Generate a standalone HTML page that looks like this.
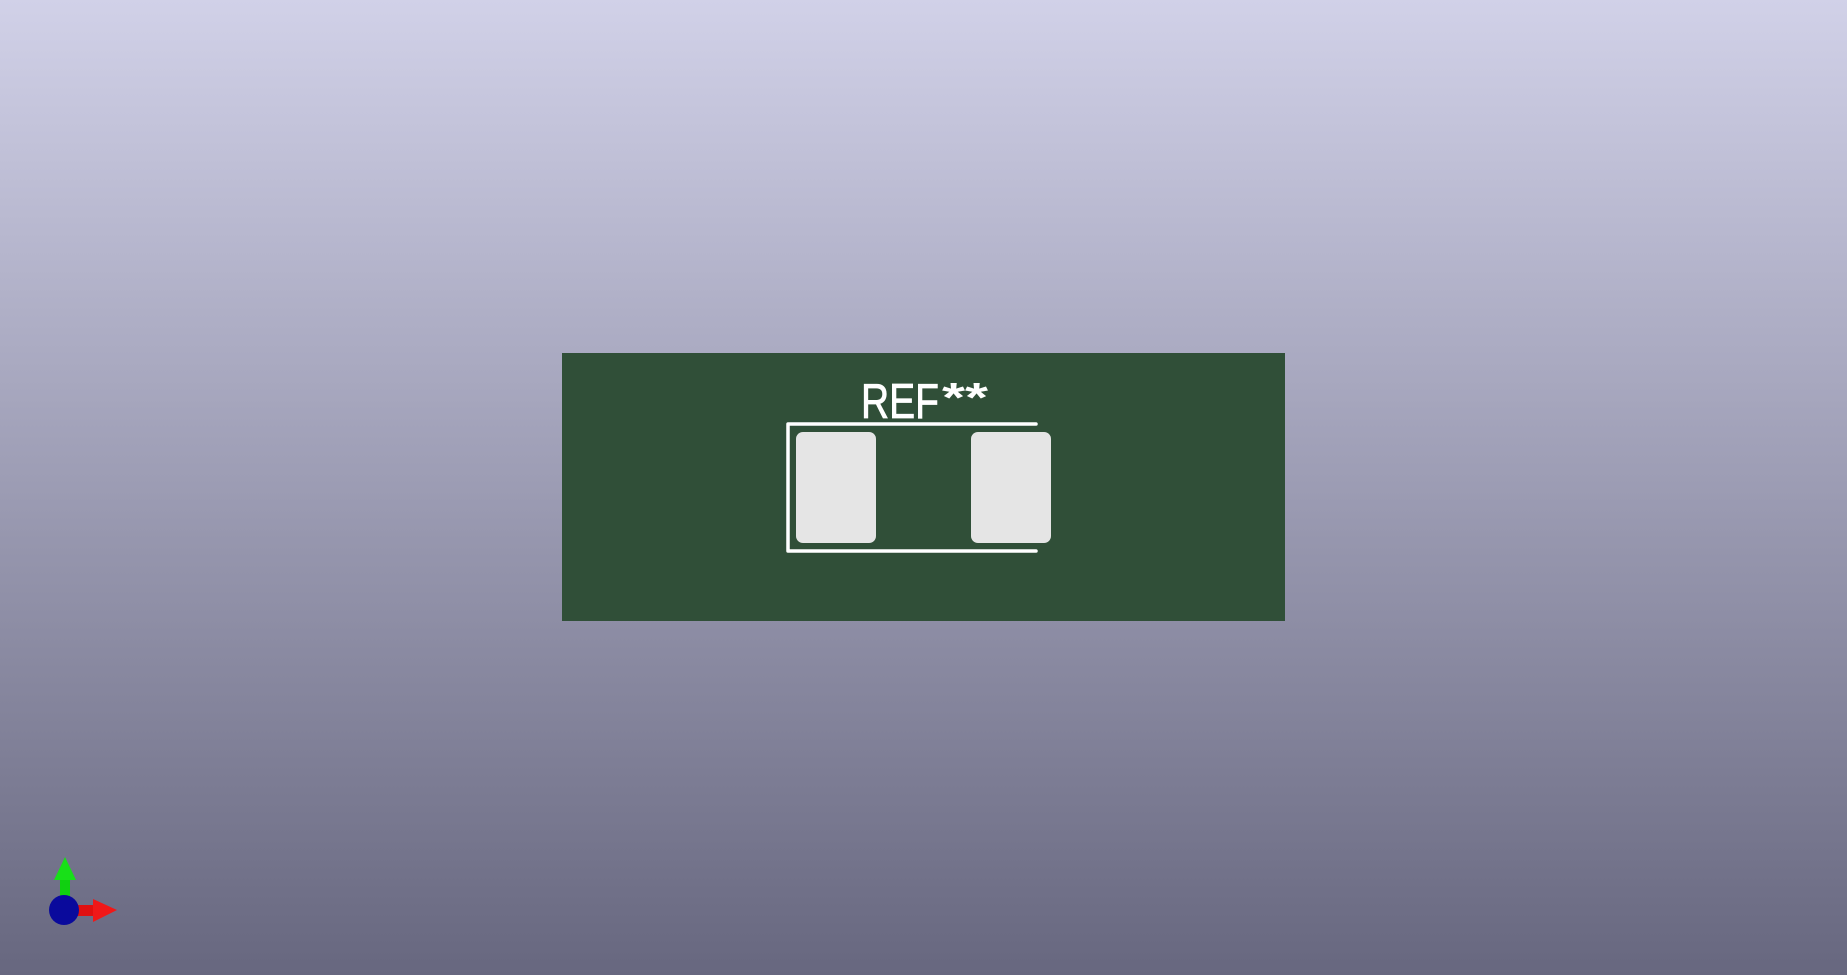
<!DOCTYPE html>
<html><head><style>
html,body{margin:0;padding:0;width:1847px;height:975px;overflow:hidden}
body{background:linear-gradient(#d1d1e8,#67677f)}
</style></head><body>
<svg width="1847" height="975" style="position:absolute;left:0;top:0">
<rect x="562" y="353" width="723" height="268" fill="#304f38"/>
<rect x="796" y="432" width="80" height="111" rx="7" fill="#e5e5e5"/>
<rect x="971" y="432" width="80" height="111" rx="7" fill="#e5e5e5"/>
<path d="M1036 424 H788 V551 H1036" fill="none" stroke="#fff" stroke-width="3.5" stroke-linecap="round" stroke-linejoin="round"/>
<text x="861" y="418" font-family="Liberation Sans, sans-serif" font-size="49" fill="#fff" stroke="#fff" stroke-width="0.8" textLength="78" lengthAdjust="spacingAndGlyphs">REF</text>
<text x="942" y="412" font-family="Liberation Sans, sans-serif" font-size="42" font-weight="bold" fill="#fff" textLength="46" lengthAdjust="spacingAndGlyphs">**</text>
<rect x="60" y="878" width="10" height="24" fill="#10d010"/>
<polygon points="65,857 54,880 76,880" fill="#18e018"/>
<rect x="76" y="905" width="19" height="11" fill="#e01010"/>
<polygon points="117,910 93,899 93,922" fill="#f01818"/>
<circle cx="64" cy="910" r="15" fill="#0a0a9c"/>
</svg>
</body></html>
